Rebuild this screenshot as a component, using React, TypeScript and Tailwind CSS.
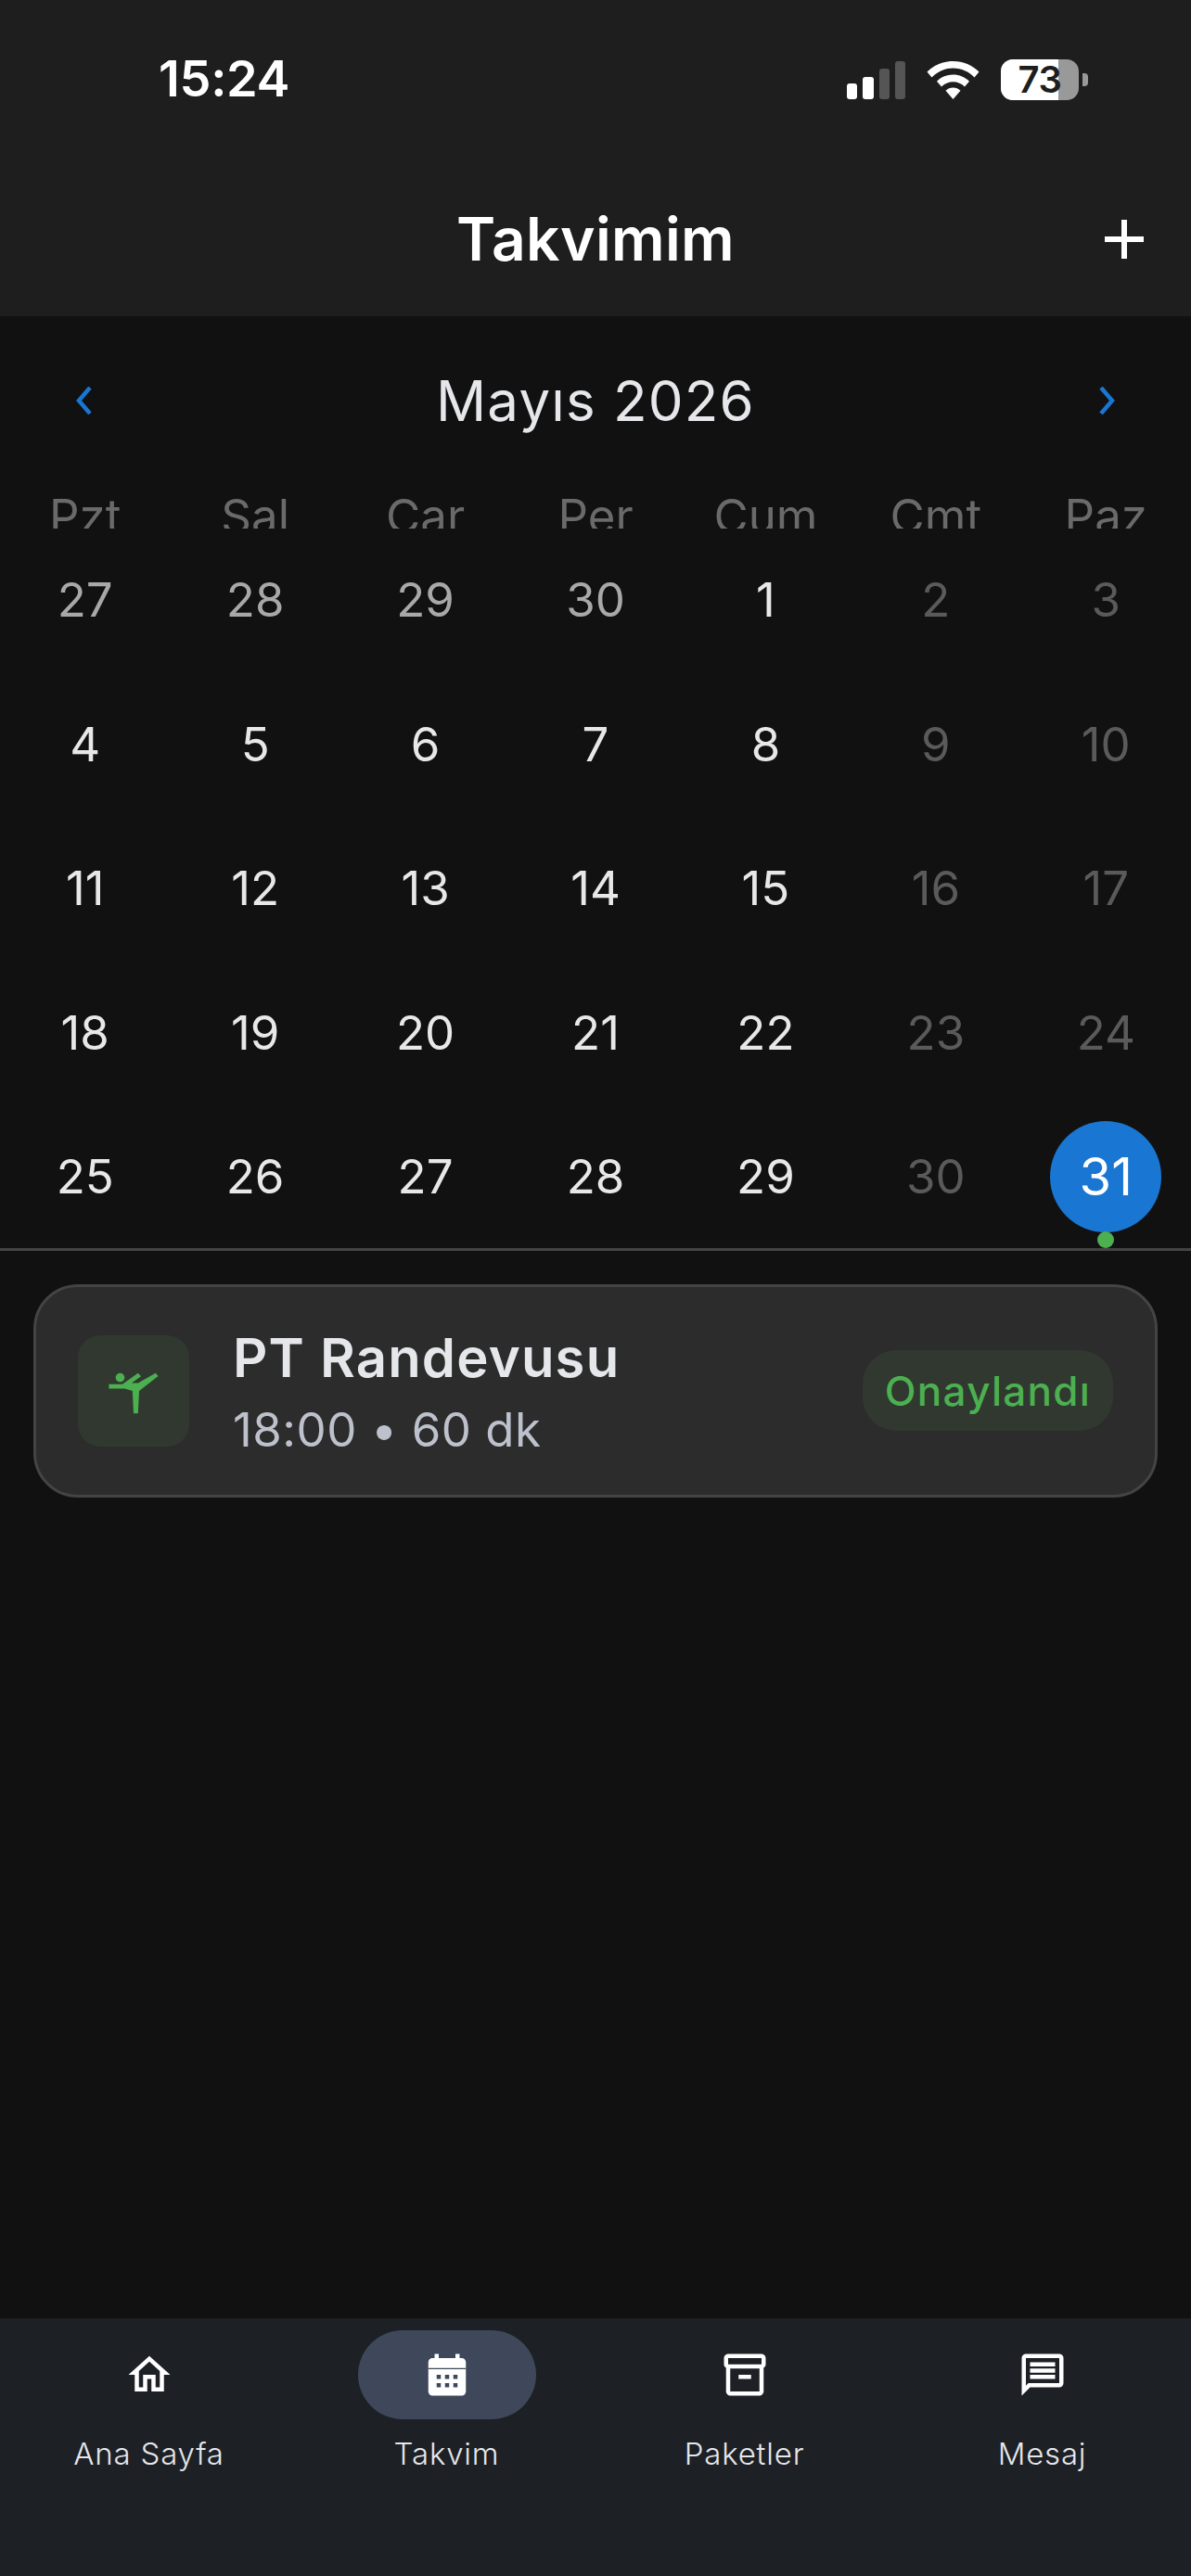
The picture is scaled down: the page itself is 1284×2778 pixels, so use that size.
import { MdOutlineHome, MdOutlineInventory2, MdOutlineMessage, MdSportsGymnastics } from "react-icons/md";

const weekDays = ["Pzt", "Sal", "Çar", "Per", "Cum", "Cmt", "Paz"];

// tone: "prev" = previous month, "day" = weekday, "off" = weekend, "today" = selected
type Day = { label: number; tone: "prev" | "day" | "off" | "today" };

function week(start: number): Day[] {
  return Array.from({ length: 7 }, (_, i) => ({
    label: start + i,
    tone: i > 4 ? ("off" as const) : ("day" as const),
  }));
}

const firstRow: Day[] = [
  { label: 27, tone: "prev" },
  { label: 28, tone: "prev" },
  { label: 29, tone: "prev" },
  { label: 30, tone: "prev" },
  { label: 1, tone: "day" },
  { label: 2, tone: "off" },
  { label: 3, tone: "off" },
];

const rows: Day[][] = [
  firstRow,
  week(4),
  week(11),
  week(18),
  [...week(25).slice(0, 6), { label: 31, tone: "today" }],
];

const toneClass = {
  prev: "text-[#a8a8a8]",
  day: "text-[#e8e8e8]",
  off: "text-[#5a5a5a]",
  today: "text-white",
};

function StatusIcons() {
  return (
    <div className="flex items-center">
      <div className="flex items-end gap-[6px] h-[41px]">
        <div className="w-[11px] h-[17px] rounded-[3px] bg-white" />
        <div className="w-[12px] h-[24px] rounded-[3px] bg-white" />
        <div className="w-[11px] h-[33px] rounded-[3px] bg-[#555555]" />
        <div className="w-[11px] h-[41px] rounded-[3px] bg-[#555555]" />
      </div>
      <svg className="ml-[23px]" width="57" height="41" viewBox="0 0 57 41" fill="white">
        <path d="M28.5 0C17.5 0 7.6 4.3 0.5 11.5L5.5 17.5C11.4 11.4 19.5 7.6 28.5 7.6C37.5 7.6 45.6 11.4 51.500 17.5L56.5 11.5C49.4 4.3 39.5 0 28.5 0Z" />
        <path d="M28.5 14.5C21.7 14.5 15.5 17.2 11 21.7L16 27.5C19.2 24.2 23.6 22.2 28.5 22.2C33.4 22.2 37.8 24.2 41 27.5L46 21.7C41.5 17.2 35.3 14.5 28.5 14.5Z" />
        <path d="M28.5 28.5C25.3 28.5 22.5 29.7 20.5 31.800L28.5 41L36.5 31.8C34.5 29.7 31.7 28.5 28.5 28.5Z" />
      </svg>
      <div className="ml-[23px] relative w-[84px] h-[44px] rounded-[13px] overflow-hidden bg-[#999999]">
        <div className="h-full w-[62px] bg-white" />
        <span className="absolute inset-0 flex items-center justify-center text-[40px] font-semibold leading-none text-[#1e1e1e] tracking-[-0.5px]">
          73
        </span>
      </div>
      <div className="ml-[4px] w-[6px] h-[14px] rounded-r-[4px] bg-[#999999]" />
    </div>
  );
}

function Chevron({ points }: { points: string }) {
  return (
    <svg width="22" height="30" viewBox="0 0 22 30" fill="none" stroke="#1976d2" strokeWidth="4.5">
      <polyline points={points} />
    </svg>
  );
}

function CalendarFilled() {
  return (
    <svg width="54" height="54" viewBox="0 0 24 24">
      <path
        fill="white"
        d="M19 4h-1V2h-2v2H8V2H6v2H5C3.9 4 3 4.9 3 6v14c0 1.1.9 2 2 2h14c1.1 0 2-.9 2-2V6c0-1.100-.9-2-2-2z"
      />
      <path
        fill="#3e485a"
        d="M3 8.800h18v.5H3zM7 12h2v2H7zM11 12h2v2h-2zM15 12h2v2h-2zM7 16h2v2H7zM11 16h2v2h-2zM15 16h2v2h-2z"
      />
    </svg>
  );
}

const tabs = [
  { label: "Ana Sayfa", icon: <MdOutlineHome size={54} color="white" /> },
  { label: "Takvim", icon: <CalendarFilled />, active: true },
  { label: "Paketler", icon: <MdOutlineInventory2 size={54} color="white" /> },
  { label: "Mesaj", icon: <MdOutlineMessage size={54} color="white" /> },
];

export default function App() {
  return (
    <div className="w-[1284px] h-[2778px] flex flex-col bg-[#111111] font-['Inter',sans-serif] overflow-hidden">
      {/* Status bar + title */}
      <header className="h-[341px] shrink-0 bg-[#1e1e1e] text-white">
        <div className="h-[170px] flex items-start justify-between pl-[171px] pr-[111px] pt-[62px]">
          <span className="text-[54px] leading-[46px] font-semibold tracking-[-0.3px]">15:24</span>
          <div className="pt-[2px]">
            <StatusIcons />
          </div>
        </div>
        <div className="relative flex justify-center">
          <h1 className="text-[64px] leading-[176px] font-semibold tracking-[0.3px]">Takvimim</h1>
          <svg className="absolute right-[36px] top-[52px]" width="72" height="72" viewBox="0 0 24 24" fill="white">
            <path d="M19 13h-6v6h-2v-6H5v-2h6V5h2v6h6v2z" />
          </svg>
        </div>
      </header>

      <main className="flex-1">
        {/* Month switcher */}
        <div className="h-[182px] flex items-center justify-between px-[79px]">
          <Chevron points="18,1 6,15 18,29" />
          <span className="text-[60px] text-[#e5e7eb] tracking-[1.2px]">Mayıs 2026</span>
          <Chevron points="4,1 16,15 4,29" />
        </div>

        {/* Week header, cut off at the bottom */}
        <div className="h-[47px] overflow-hidden grid grid-cols-7 text-[51px] leading-[67px] font-[375] text-center text-[#6a6a6a]">
          {weekDays.map((d) => (
            <span key={d}>{d}</span>
          ))}
        </div>

        <div className="grid grid-cols-7 auto-rows-[155.4px] text-[51px] font-[375]">
          {rows.flat().map((d, i) => (
            <div key={i} className={`relative flex items-center justify-center ${toneClass[d.tone]}`}>
              {d.tone === "today" ? (
                <>
                  <span className="w-[120px] h-[120px] rounded-full bg-[#1976d2] flex items-center justify-center text-[56px]">
                    {d.label}
                  </span>
                  <span className="absolute left-1/2 -translate-x-1/2 bottom-[1px] w-[18px] h-[18px] rounded-full bg-[#4caf50]" />
                </>
              ) : (
                d.label
              )}
            </div>
          ))}
        </div>

        <div className="h-[3px] -mt-[1px] bg-[#444444]" />

        {/* Appointment */}
        <div className="mx-[36px] mt-[36px] h-[230px] rounded-[48px] border-[3px] border-[#444444] bg-[#2c2c2c] px-[45px] flex items-center">
          <div className="w-[120px] h-[120px] rounded-[24px] bg-[#303830] flex items-center justify-center">
            <MdSportsGymnastics size={58} color="#4caf50" />
          </div>
          <div className="ml-[47px] flex-1">
            <div className="text-[58px] leading-[72px] font-semibold text-[#e5e7eb] tracking-[1.2px]">PT Randevusu</div>
            <div className="text-[51px] leading-[60px] mt-[12px] font-[375] text-[#bcc1cc] tracking-[0.5px]">18:00 • 60 dk</div>
          </div>
          <span className="w-[270px] h-[87px] rounded-[36px] bg-[#303830] flex items-center justify-center text-[44px] font-[550] text-[#4caf50] tracking-[1.3px]">
            Onaylandı
          </span>
        </div>
      </main>

      {/* Bottom tabs */}
      <nav className="h-[278px] shrink-0 bg-[#1d2025] grid grid-cols-4 pt-[13px]">
        {tabs.map((t) => (
          <div key={t.label} className="flex flex-col items-center">
            <div className={`w-[192px] h-[96px] rounded-[48px] flex items-center justify-center ${t.active ? "bg-[#3e485a]" : ""}`}>
              {t.icon}
            </div>
            <span className="mt-[15px] text-[33px] leading-[44px] font-[350] text-[#e5e7eb] tracking-[0.8px]">{t.label}</span>
          </div>
        ))}
      </nav>
    </div>
  );
}
